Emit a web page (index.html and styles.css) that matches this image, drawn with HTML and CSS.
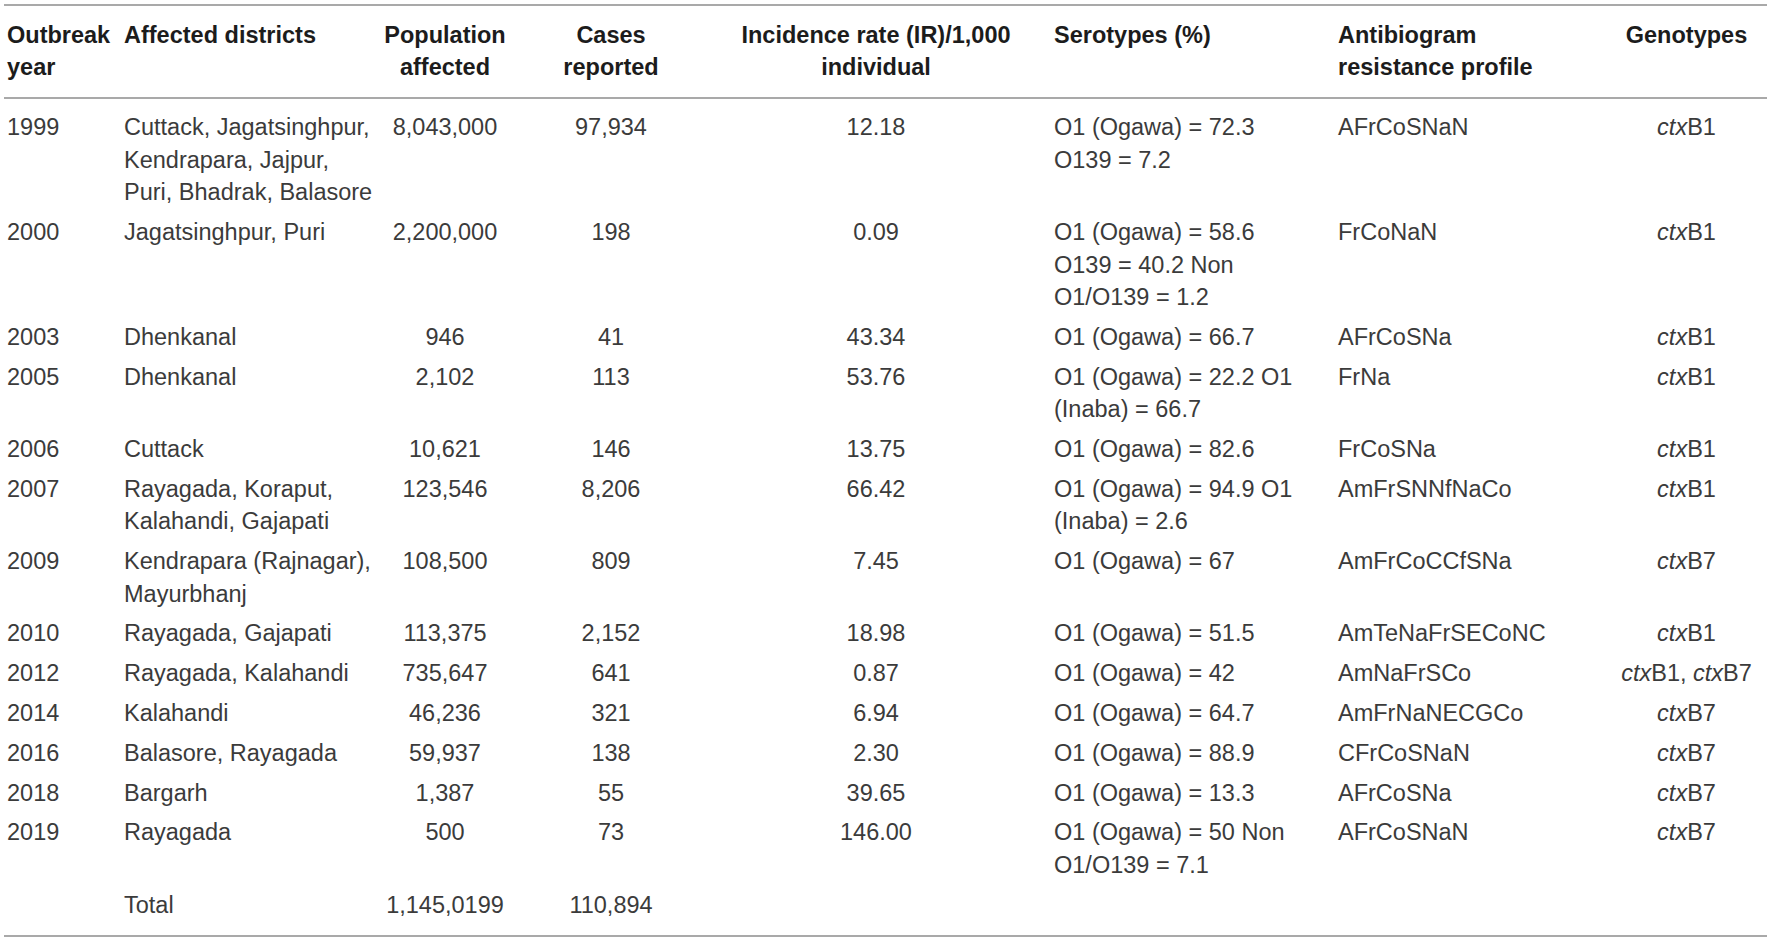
FILE: index.html
```html
<!DOCTYPE html>
<html lang="en">
<head>
<meta charset="utf-8">
<title>Cholera outbreaks</title>
<link rel="stylesheet" href="styles.css">
</head>
<body>
<table class="data">
  <colgroup>
    <col class="c-year">
    <col class="c-dist">
    <col class="c-pop">
    <col class="c-cases">
    <col class="c-ir">
    <col class="c-sero">
    <col class="c-anti">
    <col class="c-geno">
  </colgroup>
  <thead>
    <tr>
      <th class="l first">Outbreak<br>year</th>
      <th class="l">Affected districts</th>
      <th class="c">Population<br>affected</th>
      <th class="c">Cases<br>reported</th>
      <th class="c">Incidence rate (IR)/1,000<br>individual</th>
      <th class="l ind">Serotypes (%)</th>
      <th class="l ind">Antibiogram<br>resistance profile</th>
      <th class="c">Genotypes</th>
    </tr>
  </thead>
  <tbody>
    <tr>
      <td class="l first">1999</td>
      <td class="l">Cuttack, Jagatsinghpur,<br>Kendrapara, Jajpur,<br>Puri, Bhadrak, Balasore</td>
      <td class="c">8,043,000</td>
      <td class="c">97,934</td>
      <td class="c">12.18</td>
      <td class="l ind">O1 (Ogawa) = 72.3<br>O139 = 7.2</td>
      <td class="l ind">AFrCoSNaN</td>
      <td class="c"><i>ctx</i>B1</td>
    </tr>
    <tr>
      <td class="l first">2000</td>
      <td class="l">Jagatsinghpur, Puri</td>
      <td class="c">2,200,000</td>
      <td class="c">198</td>
      <td class="c">0.09</td>
      <td class="l ind">O1 (Ogawa) = 58.6<br>O139 = 40.2 Non<br>O1/O139 = 1.2</td>
      <td class="l ind">FrCoNaN</td>
      <td class="c"><i>ctx</i>B1</td>
    </tr>
    <tr>
      <td class="l first">2003</td>
      <td class="l">Dhenkanal</td>
      <td class="c">946</td>
      <td class="c">41</td>
      <td class="c">43.34</td>
      <td class="l ind">O1 (Ogawa) = 66.7</td>
      <td class="l ind">AFrCoSNa</td>
      <td class="c"><i>ctx</i>B1</td>
    </tr>
    <tr>
      <td class="l first">2005</td>
      <td class="l">Dhenkanal</td>
      <td class="c">2,102</td>
      <td class="c">113</td>
      <td class="c">53.76</td>
      <td class="l ind">O1 (Ogawa) = 22.2 O1<br>(Inaba) = 66.7</td>
      <td class="l ind">FrNa</td>
      <td class="c"><i>ctx</i>B1</td>
    </tr>
    <tr>
      <td class="l first">2006</td>
      <td class="l">Cuttack</td>
      <td class="c">10,621</td>
      <td class="c">146</td>
      <td class="c">13.75</td>
      <td class="l ind">O1 (Ogawa) = 82.6</td>
      <td class="l ind">FrCoSNa</td>
      <td class="c"><i>ctx</i>B1</td>
    </tr>
    <tr>
      <td class="l first">2007</td>
      <td class="l">Rayagada, Koraput,<br>Kalahandi, Gajapati</td>
      <td class="c">123,546</td>
      <td class="c">8,206</td>
      <td class="c">66.42</td>
      <td class="l ind">O1 (Ogawa) = 94.9 O1<br>(Inaba) = 2.6</td>
      <td class="l ind">AmFrSNNfNaCo</td>
      <td class="c"><i>ctx</i>B1</td>
    </tr>
    <tr>
      <td class="l first">2009</td>
      <td class="l">Kendrapara (Rajnagar),<br>Mayurbhanj</td>
      <td class="c">108,500</td>
      <td class="c">809</td>
      <td class="c">7.45</td>
      <td class="l ind">O1 (Ogawa) = 67</td>
      <td class="l ind">AmFrCoCCfSNa</td>
      <td class="c"><i>ctx</i>B7</td>
    </tr>
    <tr>
      <td class="l first">2010</td>
      <td class="l">Rayagada, Gajapati</td>
      <td class="c">113,375</td>
      <td class="c">2,152</td>
      <td class="c">18.98</td>
      <td class="l ind">O1 (Ogawa) = 51.5</td>
      <td class="l ind">AmTeNaFrSECoNC</td>
      <td class="c"><i>ctx</i>B1</td>
    </tr>
    <tr>
      <td class="l first">2012</td>
      <td class="l">Rayagada, Kalahandi</td>
      <td class="c">735,647</td>
      <td class="c">641</td>
      <td class="c">0.87</td>
      <td class="l ind">O1 (Ogawa) = 42</td>
      <td class="l ind">AmNaFrSCo</td>
      <td class="c"><i>ctx</i>B1, <i>ctx</i>B7</td>
    </tr>
    <tr>
      <td class="l first">2014</td>
      <td class="l">Kalahandi</td>
      <td class="c">46,236</td>
      <td class="c">321</td>
      <td class="c">6.94</td>
      <td class="l ind">O1 (Ogawa) = 64.7</td>
      <td class="l ind">AmFrNaNECGCo</td>
      <td class="c"><i>ctx</i>B7</td>
    </tr>
    <tr>
      <td class="l first">2016</td>
      <td class="l">Balasore, Rayagada</td>
      <td class="c">59,937</td>
      <td class="c">138</td>
      <td class="c">2.30</td>
      <td class="l ind">O1 (Ogawa) = 88.9</td>
      <td class="l ind">CFrCoSNaN</td>
      <td class="c"><i>ctx</i>B7</td>
    </tr>
    <tr>
      <td class="l first">2018</td>
      <td class="l">Bargarh</td>
      <td class="c">1,387</td>
      <td class="c">55</td>
      <td class="c">39.65</td>
      <td class="l ind">O1 (Ogawa) = 13.3</td>
      <td class="l ind">AFrCoSNa</td>
      <td class="c"><i>ctx</i>B7</td>
    </tr>
    <tr>
      <td class="l first">2019</td>
      <td class="l">Rayagada</td>
      <td class="c">500</td>
      <td class="c">73</td>
      <td class="c">146.00</td>
      <td class="l ind">O1 (Ogawa) = 50 Non<br>O1/O139 = 7.1</td>
      <td class="l ind">AFrCoSNaN</td>
      <td class="c"><i>ctx</i>B7</td>
    </tr>
    <tr class="total">
      <td class="l first"></td>
      <td class="l">Total</td>
      <td class="c">1,145,0199</td>
      <td class="c">110,894</td>
      <td class="c"></td>
      <td class="l ind"></td>
      <td class="l ind"></td>
      <td class="c"></td>
    </tr>
  </tbody>
</table>
</body>
</html>
```

FILE: styles.css
```css
html, body {
  margin: 0;
  padding: 0;
  background: #ffffff;
}

body {
  padding: 4px 5px 0 4px;
  font-family: "Liberation Sans", Arial, Helvetica, sans-serif;
  font-size: 23.5px;
  line-height: 32.5px;
  color: #3b3b3b;
}

.data {
  border-collapse: collapse;
  table-layout: fixed;
  width: 1763px;
  border-top: 2px solid #a9a9a9;
  border-bottom: 2px solid #a9a9a9;
}

.c-year { width: 120px; }
.c-dist { width: 256px; }
.c-pop { width: 130px; }
.c-cases { width: 202px; }
.c-ir { width: 328px; }
.c-sero { width: 284px; }
.c-anti { width: 282px; }
.c-geno { width: 161px; }

th, td {
  padding: 3.65px 0;
  vertical-align: top;
  white-space: nowrap;
}

th {
  font-weight: bold;
  color: #1c1c1c;
  padding-top: 12.75px;
  padding-bottom: 13.25px;
  border-bottom: 2px solid #a9a9a9;
}

.l { text-align: left; }
.c { text-align: center; }
.ind { padding-left: 14px; }
.first { padding-left: 3px; }

tbody tr:first-child td { padding-top: 12.45px; }
tbody tr.total td { padding-bottom: 13.65px; }

i { font-style: italic; }
```
